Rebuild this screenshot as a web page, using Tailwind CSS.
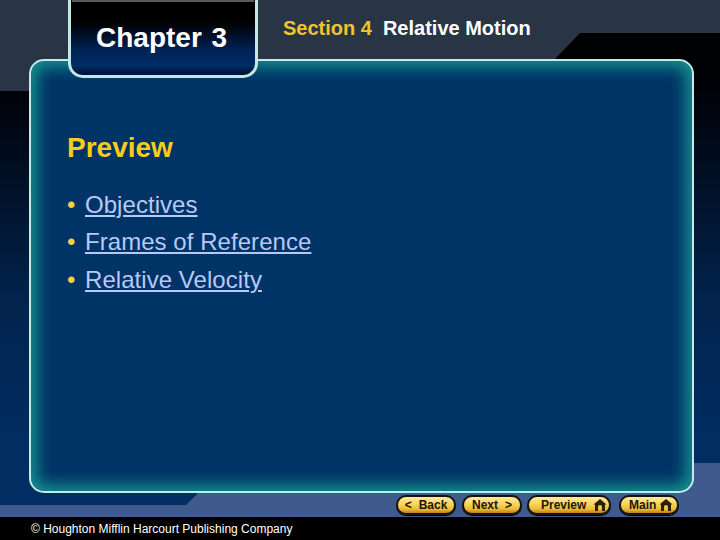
<!DOCTYPE html>
<html>
<head>
<meta charset="utf-8">
<script src="https://cdn.jsdelivr.net/npm/@tailwindcss/browser@4"></script>
</head>
<body class="bg-black">
<div class="relative w-[720px] h-[540px] overflow-hidden bg-[#293544] font-['Liberation_Sans',Arial,sans-serif]">
  <!-- backdrop shapes -->
  <div class="absolute inset-x-0 top-[463px] h-[54px] bg-[#3f5a8c]"></div>
  <div class="absolute inset-0 bg-[linear-gradient(180deg,#000_33px,#000208_91px,#02234c_300px,#012d62_440px,#012d62_540px)] [clip-path:polygon(0_91px,524px_91px,580px_33px,720px_33px,720px_463px,650px_463px,650px_493px,198px_493px,186px_505px,0_505px)]"></div>

  <div class="relative flex flex-col h-full">
    <!-- header -->
    <header class="h-[59px] pl-[283px] pt-[15px] flex items-start text-[20px] leading-[26px] font-bold whitespace-pre">
      <span class="text-[#efc52f]">Section 4</span><span class="ml-[11px] text-white">Relative Motion</span>
    </header>

    <!-- panel -->
    <main class="ml-[29px] w-[665px] h-[434px] rounded-[15px] border-[2.5px] border-[#bdeee8] bg-[#003366] shadow-[inset_0_0_16px_6px_#15938f] pl-[36px] pt-[70px]">
      <h1 class="text-[28px] leading-[34px] font-bold text-[#f5cd1e]">Preview</h1>
      <ul class="mt-[21px] text-[24px] leading-[37px] tracking-[0.05px] text-[#b8c9f8]">
        <li class="flex"><span class="w-[18px] text-[#f5d040]">•</span><a class="underline decoration-[2px] underline-offset-[2px]">Objectives</a></li>
        <li class="flex"><span class="w-[18px] text-[#f5d040]">•</span><a class="underline decoration-[2px] underline-offset-[2px]">Frames of Reference</a></li>
        <li class="flex mt-[1px]"><span class="w-[18px] text-[#f5d040]">•</span><a class="underline decoration-[2px] underline-offset-[2px]">Relative Velocity</a></li>
      </ul>
    </main>

    <!-- nav -->
    <nav class="h-[24px] pt-[2px] pl-[396px] flex items-start text-[12px] leading-none font-bold text-[#1c1608]">
      <a class="w-[60px] h-[20px] rounded-full border-2 border-[#15130f] shadow-[0_1px_0_#000] bg-[linear-gradient(180deg,#ffeb9a_0%,#f7d45a_45%,#eebc38_75%,#b8851e_100%)] flex items-center justify-center gap-[7px]"><span>&lt;</span><span>Back</span></a>
      <a class="ml-[6px] w-[60px] h-[20px] rounded-full border-2 border-[#15130f] shadow-[0_1px_0_#000] bg-[linear-gradient(180deg,#ffeb9a_0%,#f7d45a_45%,#eebc38_75%,#b8851e_100%)] flex items-center justify-center gap-[7px]"><span>Next</span><span>&gt;</span></a>
      <a class="ml-[5px] w-[84px] h-[20px] rounded-full border-2 border-[#15130f] shadow-[0_1px_0_#000] bg-[linear-gradient(180deg,#ffeb9a_0%,#f7d45a_45%,#eebc38_75%,#b8851e_100%)] flex items-center pl-[12px] gap-[7px]"><span>Preview</span>
        <svg width="14" height="12" viewBox="0 0 14 12"><path fill="#2a2008" d="M7 0 L13.5 5.5 L12 5.5 V12 H9 V8 A2 2 0 0 0 5 8 V12 H2 V5.5 H0.5 Z"/></svg></a>
      <a class="ml-[8px] w-[60px] h-[20px] rounded-full border-2 border-[#15130f] shadow-[0_1px_0_#000] bg-[linear-gradient(180deg,#ffeb9a_0%,#f7d45a_45%,#eebc38_75%,#b8851e_100%)] flex items-center pl-[8px] gap-[3px]"><span>Main</span>
        <svg width="14" height="12" viewBox="0 0 14 12"><path fill="#2a2008" d="M7 0 L13.5 5.5 L12 5.5 V12 H9 V8 A2 2 0 0 0 5 8 V12 H2 V5.5 H0.5 Z"/></svg></a>
    </nav>

    <!-- footer -->
    <footer class="h-[23px] bg-black pl-[31px] text-[12px] leading-[25px] text-white">© Houghton Mifflin Harcourt Publishing Company</footer>
  </div>

  <!-- chapter tab, laid over the panel -->
  <div class="absolute left-[68px] top-0 w-[190px] h-[78px] rounded-b-[15px] border-x-[3px] border-b-[3px] border-[#c3e8e4] bg-[linear-gradient(180deg,#000_0,#000_22px,#00245a_52px,#002c64_66px,#00163c_73px)] flex flex-col">
    <div class="h-[2px] mx-[1px] bg-[#5a5a5a]"></div>
    <div class="flex-1 pl-[25px] pt-[19px] text-[28px] leading-[34px] font-bold text-white [word-spacing:2px]">Chapter 3</div>
  </div>
</div>
</body>
</html>
